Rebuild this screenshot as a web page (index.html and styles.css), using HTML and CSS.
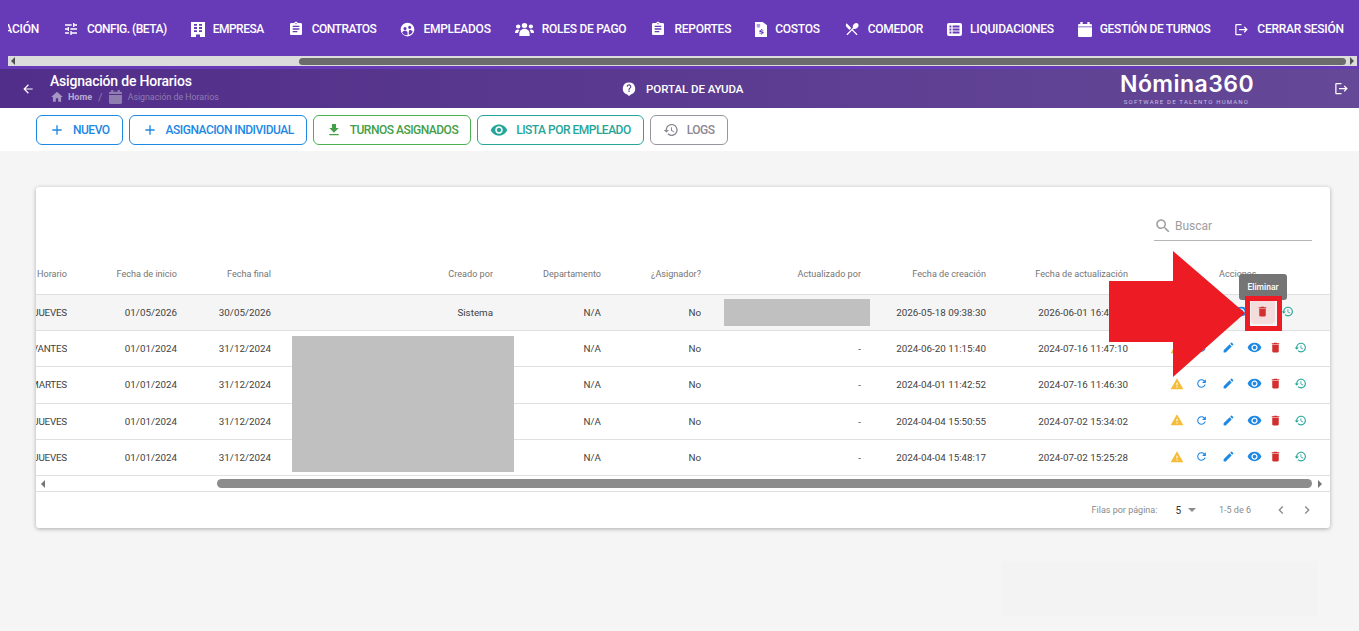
FILE: index.html
```html
<!doctype html>
<html lang="es">
<head>
	<meta charset="UTF-8">
	<title>Asignación de Horarios</title>
	<link rel="stylesheet" href="styles.css">
</head>
<body>
	<svg class="defs" width="0" height="0">
		<symbol id="i-tune" viewBox="0 0 24 24"><path d="M3 17v2h6v-2H3zM3 5v2h10V5H3zm10 16v-2h8v-2h-8v-2h-2v6h2zM7 9v2H3v2h4v2h2V9H7zm14 4v-2H11v2h10zm-6-4h2V7h4V5h-4V3h-2v6z"/></symbol>
		<symbol id="i-building" viewBox="1 0 14 24" preserveAspectRatio="none"><path fill-rule="evenodd" d="M1 0h14v24H10v-4H6v4H1V0zm3 3v3h3V3H4zm5 0v3h3V3H9zM4 8v3h3V8H4zm5 0v3h3V8H9zm-5 5v3h3v-3H4zm5 0v3h3v-3H9z"/></symbol>
		<symbol id="i-clip" viewBox="0 0 24 24"><path d="M19 3h-4.180C14.400 1.840 13.300 1 12 1c-1.300 0-2.400.84-2.820 2H5c-1.100 0-2 .9-2 2v14c0 1.100.9 2 2 2h14c1.100 0 2-.9 2-2V5c0-1.100-.9-2-2-2zm-7 0c.55 0 1 .45 1 1s-.45 1-1 1-1-.45-1-1 .45-1 1-1zm2 14H7v-2h7v2zm3-4H7v-2h10v2zm0-4H7V7h10v2z"/></symbol>
		<symbol id="i-emp" viewBox="0 0 24 24"><path fill-rule="evenodd" d="M12 1a11 11 0 1 0 0 22 11 11 0 0 0 0-22zM8 8a2.500 2.500 0 1 1 0 5 2.500 2.500 0 0 1 0-5zm7.500-2a2.500 2.500 0 1 1 0 5 2.500 2.500 0 0 1 0-5zM3.500 17c.5-2 2.500-3 4.500-3s3.500.8 4 2.500V21a9 9 0 0 1-8.500-4zM14 20.500V16c0-1 .5-2 .8-3 2.200-.3 4.700.6 5.700 2.500A9 9 0 0 1 14 20.500z"/></symbol>
		<symbol id="i-users" viewBox="0 0 24 18" preserveAspectRatio="none"><path d="M12 0a3.500 3.500 0 1 1 0 7 3.500 3.500 0 0 1 0-7zM4 2a2.800 2.800 0 1 1 0 5.600A2.800 2.800 0 0 1 4 2zm16 0a2.800 2.800 0 1 1 0 5.600A2.800 2.800 0 0 1 20 2zM0 13c0-2.500 1.500-4 3.500-4 1 0 1.700.3 2.300.8C4.500 11 4 12.500 4 14H0v-1zm24 0v1h-4c0-1.500-.5-3-1.800-4.200.6-.5 1.300-.8 2.300-.8 2 0 3.500 1.500 3.500 4zM5.500 15c0-3.500 2.500-7 6.500-7s6.500 3.500 6.500 7v3h-13v-3z"/></symbol>
		<symbol id="i-doc" viewBox="1 0 14 24" preserveAspectRatio="none"><path fill-rule="evenodd" d="M1 0h9l5 5v19H1V0zm2 4v1.500h4V4H3zm0 3v1.500h4V7H3zm5 4.500v1.200c-1.300.2-2 1-2 2 0 1.200 1 1.600 2 1.900.9.300 1.200.5 1.200.9s-.5.700-1.200.7c-.8 0-1.300-.3-1.400-.9H5.800c.1 1.100.9 1.800 2.200 2V20h1v-1.200c1.300-.2 2.200-1 2.200-2.100 0-1.300-1-1.700-2.200-2-.8-.3-1-.5-1-.8 0-.4.400-.6 1-.6s1 .3 1.100.7h1.100c-.1-1-.9-1.600-2.200-1.800v-1.200H8z"/></symbol>
		<symbol id="i-dining" viewBox="0 0 24 24"><path d="M8.100 13.340l2.830-2.830L3.910 3.500c-1.560 1.560-1.560 4.090 0 5.660l4.190 4.180zm6.780-1.810c1.530.71 3.680.21 5.270-1.380 1.910-1.910 2.280-4.650.81-6.120-1.460-1.460-4.200-1.100-6.120.81-1.590 1.590-2.090 3.740-1.380 5.270L3.700 19.870l1.410 1.410L12 14.410l6.880 6.880 1.410-1.410L13.410 13l1.470-1.470z"/></symbol>
		<symbol id="i-list" viewBox="0 0 24 20" preserveAspectRatio="none"><path fill-rule="evenodd" d="M3 0h18a3 3 0 0 1 3 3v14a3 3 0 0 1-3 3H3a3 3 0 0 1-3-3V3a3 3 0 0 1 3-3zm1 4v3h3V4H4zm5 0v3h11V4H9zM4 8.500v3h3v-3H4zm5 0v3h11v-3H9zM4 13v3h3v-3H4zm5 0v3h11v-3H9z"/></symbol>
		<symbol id="i-cal" viewBox="3 0 18 24" preserveAspectRatio="none"><path d="M19 3h-1V0h-3v3H9V0H6v3H5C3.900 3 3 3.900 3 5v2h18V5c0-1.100-.9-2-2-2zM3 8.500V22c0 1.100.9 2 2 2h14c1.100 0 2-.9 2-2V8.500H3z"/></symbol>
		<symbol id="i-logout" viewBox="0 0 24 24"><path d="M17 7l-1.410 1.410L18.170 11H8v2h10.170l-2.580 2.580L17 17l5-5zM4 5h8V3H4c-1.100 0-2 .9-2 2v14c0 1.100.9 2 2 2h8v-2H4V5z"/></symbol>
		<symbol id="i-back" viewBox="0 0 24 24"><path d="M20 11H7.830l5.590-5.590L12 4l-8 8 8 8 1.410-1.410L7.830 13H20v-2z"/></symbol>
		<symbol id="i-home" viewBox="0 0 24 24"><path d="M10 20v-6h4v6h5v-8h3L12 3 2 12h3v8z"/></symbol>
		<symbol id="i-help" viewBox="0 0 24 24"><path fill-rule="evenodd" d="M12 1a10.500 10.500 0 0 0-3 20.600L12 24l3-2.400A10.500 10.500 0 0 0 12 1zm1 16h-2v-2h2v2zm2.100-6.700l-.9.9c-.7.700-1.200 1.300-1.200 2.800h-2v-.5c0-1.100.5-2.100 1.200-2.800l1.200-1.300c.4-.4.600-.9.600-1.400 0-1.100-.9-2-2-2s-2 .9-2 2H8c0-2.200 1.800-4 4-4s4 1.800 4 4c0 .9-.4 1.700-.9 2.300z"/></symbol>
		<symbol id="i-add" viewBox="0 0 24 24"><path d="M19 13h-6v6h-2v-6H5v-2h6V5h2v6h6v2z"/></symbol>
		<symbol id="i-down" viewBox="0 0 24 24"><path d="M19 9h-4V3H9v6H5l7 7 7-7zM5 18v2h14v-2H5z"/></symbol>
		<symbol id="i-eye" viewBox="0 0 24 24"><path d="M12 4.500C7 4.500 2.730 7.610 1 12c1.730 4.390 6 7.500 11 7.500s9.270-3.110 11-7.500c-1.730-4.390-6-7.500-11-7.500zM12 17c-2.760 0-5-2.240-5-5s2.240-5 5-5 5 2.240 5 5-2.240 5-5 5zm0-8c-1.660 0-3 1.340-3 3s1.340 3 3 3 3-1.340 3-3-1.340-3-3-3z"/></symbol>
		<symbol id="i-history" viewBox="0 0 24 24"><path d="M13 3c-4.970 0-9 4.030-9 9H1l3.890 3.890.07.14L9 12H6c0-3.870 3.130-7 7-7s7 3.130 7 7-3.130 7-7 7c-1.930 0-3.680-.79-4.940-2.060l-1.420 1.420C8.270 19.990 10.510 21 13 21c4.970 0 9-4.030 9-9s-4.030-9-9-9zm-1 5v5l4.280 2.540.72-1.210-3.500-2.080V8H12z"/></symbol>
		<symbol id="i-warn" viewBox="0 0 24 24"><path d="M1 21h22L12 2 1 21zm12-3h-2v-2h2v2zm0-4h-2v-4h2v4z"/></symbol>
		<symbol id="i-refresh" viewBox="0 0 24 24"><path d="M17.650 6.350C16.200 4.900 14.210 4 12 4c-4.420 0-7.990 3.580-7.990 8s3.570 8 7.990 8c3.730 0 6.840-2.550 7.730-6h-2.080c-.82 2.330-3.040 4-5.650 4-3.310 0-6-2.690-6-6s2.690-6 6-6c1.660 0 3.140.69 4.220 1.780L13 11h7V4l-2.350 2.350z"/></symbol>
		<symbol id="i-edit" viewBox="0 0 24 24"><path d="M3 17.250V21h3.750L17.810 9.940l-3.750-3.750L3 17.250zM20.710 7.040c.39-.39.39-1.020 0-1.410l-2.340-2.340c-.39-.39-1.020-.39-1.410 0l-1.830 1.830 3.750 3.750 1.830-1.830z"/></symbol>
		<symbol id="i-del" viewBox="0 0 24 24"><path d="M6 19c0 1.100.9 2 2 2h8c1.100 0 2-.9 2-2V7H6v12zM19 4h-3.500l-1-1h-5l-1 1H5v2h14V4z"/></symbol>
		<symbol id="i-search" viewBox="0 0 24 24"><path d="M15.500 14h-.79l-.28-.27C15.410 12.590 16 11.110 16 9.500 16 5.910 13.090 3 9.500 3S3 5.910 3 9.500 5.910 16 9.500 16c1.610 0 3.090-.59 4.230-1.570l.27.28v.79l5 4.990L20.490 19l-4.990-5zm-6 0C7.010 14 5 11.990 5 9.500S7.010 5 9.500 5 14 7.010 14 9.500 11.990 14 9.500 14z"/></symbol>
		<symbol id="i-prev" viewBox="0 0 24 24"><path d="M15.410 7.410L14 6l-6 6 6 6 1.410-1.410L10.830 12z"/></symbol>
		<symbol id="i-next" viewBox="0 0 24 24"><path d="M10 6L8.590 7.410 13.170 12l-4.580 4.580L10 18l6-6z"/></symbol>
	</svg>

	<header class="topbar">
		<nav class="menu">
			<a class="menu-item menu-cut">ACIÓN</a>
			<a class="menu-item menu-tight"><svg class="ic w16"><use href="#i-tune"/></svg>CONFIG. (BETA)</a>
			<a class="menu-item menu-tight"><svg class="ic m-tall"><use href="#i-building"/></svg>EMPRESA</a>
			<a class="menu-item menu-tight"><svg class="ic w16"><use href="#i-clip"/></svg>CONTRATOS</a>
			<a class="menu-item"><svg class="ic w15"><use href="#i-emp"/></svg>EMPLEADOS</a>
			<a class="menu-item"><svg class="ic m-users"><use href="#i-users"/></svg>ROLES DE PAGO</a>
			<a class="menu-item"><svg class="ic w16"><use href="#i-clip"/></svg>REPORTES</a>
			<a class="menu-item"><svg class="ic m-doc"><use href="#i-doc"/></svg>COSTOS</a>
			<a class="menu-item"><svg class="ic w16"><use href="#i-dining"/></svg>COMEDOR</a>
			<a class="menu-item"><svg class="ic m-list"><use href="#i-list"/></svg>LIQUIDACIONES</a>
			<a class="menu-item menu-gest"><svg class="ic m-cal"><use href="#i-cal"/></svg>GESTIÓN DE TURNOS</a>
			<a class="menu-item"><svg class="ic w15"><use href="#i-logout"/></svg>CERRAR SESIÓN</a>
		</nav>
		<div class="hscroll hscroll-top">
			<span class="arrow arrow-left"></span>
			<div class="thumb"></div>
			<span class="arrow arrow-right"></span>
		</div>
	</header>

	<div class="subbar">
		<svg class="ic back"><use href="#i-back"/></svg>
		<div class="title-box">
			<h1>Asignación de Horarios</h1>
			<div class="crumbs">
				<svg class="ic w14"><use href="#i-home"/></svg><b>Home</b><i>/</i>
				<svg class="ic crumb-cal"><use href="#i-cal"/></svg><span>Asignación de Horarios</span>
			</div>
		</div>
		<a class="help"><svg class="ic w14"><use href="#i-help"/></svg>PORTAL DE AYUDA</a>
		<div class="logo">
			<strong>Nómina360</strong>
			<small>SOFTWARE DE TALENTO HUMANO</small>
		</div>
		<svg class="ic exit"><use href="#i-logout"/></svg>
	</div>

	<div class="toolbar">
		<a class="btn btn-blue"><svg class="ic w16"><use href="#i-add"/></svg>NUEVO</a>
		<a class="btn btn-blue"><svg class="ic w16"><use href="#i-add"/></svg>ASIGNACION INDIVIDUAL</a>
		<a class="btn btn-green"><svg class="ic w16"><use href="#i-down"/></svg>TURNOS ASIGNADOS</a>
		<a class="btn btn-teal"><svg class="ic w18"><use href="#i-eye"/></svg>LISTA POR EMPLEADO</a>
		<a class="btn btn-gray"><svg class="ic w16"><use href="#i-history"/></svg>LOGS</a>
	</div>

	<main class="content">
		<section class="card">
			<div class="card-top">
				<label class="search"><svg class="ic w18"><use href="#i-search"/></svg>Buscar</label>
			</div>
			<div class="table-clip">
				<table class="grid">
					<colgroup>
						<col class="c1"><col class="c2"><col class="c3"><col class="c4"><col class="c5">
						<col class="c6"><col class="c7"><col class="c8"><col class="c9"><col class="c10">
					</colgroup>
					<thead>
						<tr>
							<th>Horario</th><th>Fecha de inicio</th><th>Fecha final</th><th>Creado por</th><th>Departamento</th>
							<th>¿Asignador?</th><th>Actualizado por</th><th>Fecha de creación</th><th>Fecha de actualización</th>
							<th class="th-actions">Acciones</th>
						</tr>
					</thead>
					<tbody>
						<tr class="row-hover">
							<td>TURNO JUEVES</td><td>01/05/2026</td><td>30/05/2026</td><td>Sistema</td><td>N/A</td><td>No</td><td></td>
							<td>2026-05-18 09:38:30</td><td>2026-06-01 16:47:10</td>
							<td class="td-actions">
								<div class="actions">
									<svg class="ic warn"><use href="#i-warn"/></svg>
									<svg class="ic blue s13"><use href="#i-refresh"/></svg>
									<svg class="ic blue s13"><use href="#i-edit"/></svg>
									<svg class="ic blue s15"><use href="#i-eye"/></svg>
									<span class="del-hover"><svg class="ic del s13"><use href="#i-del"/></svg></span>
									<svg class="ic teal s13"><use href="#i-history"/></svg>
								</div>
							</td>
						</tr>
						<tr>
							<td>TURNO AVANTES</td><td>01/01/2024</td><td>31/12/2024</td><td></td><td>N/A</td><td>No</td><td>-</td>
							<td>2024-06-20 11:15:40</td><td>2024-07-16 11:47:10</td>
							<td class="td-actions">
								<div class="actions">
									<svg class="ic warn"><use href="#i-warn"/></svg>
									<svg class="ic blue s13"><use href="#i-refresh"/></svg>
									<svg class="ic blue s13"><use href="#i-edit"/></svg>
									<svg class="ic blue s15"><use href="#i-eye"/></svg>
									<svg class="ic del s13"><use href="#i-del"/></svg>
									<svg class="ic teal s13"><use href="#i-history"/></svg>
								</div>
							</td>
						</tr>
						<tr>
							<td>TURNO MARTES</td><td>01/01/2024</td><td>31/12/2024</td><td></td><td>N/A</td><td>No</td><td>-</td>
							<td>2024-04-01 11:42:52</td><td>2024-07-16 11:46:30</td>
							<td class="td-actions">
								<div class="actions">
									<svg class="ic warn"><use href="#i-warn"/></svg>
									<svg class="ic blue s13"><use href="#i-refresh"/></svg>
									<svg class="ic blue s13"><use href="#i-edit"/></svg>
									<svg class="ic blue s15"><use href="#i-eye"/></svg>
									<svg class="ic del s13"><use href="#i-del"/></svg>
									<svg class="ic teal s13"><use href="#i-history"/></svg>
								</div>
							</td>
						</tr>
						<tr>
							<td>TURNO JUEVES</td><td>01/01/2024</td><td>31/12/2024</td><td></td><td>N/A</td><td>No</td><td>-</td>
							<td>2024-04-04 15:50:55</td><td>2024-07-02 15:34:02</td>
							<td class="td-actions">
								<div class="actions">
									<svg class="ic warn"><use href="#i-warn"/></svg>
									<svg class="ic blue s13"><use href="#i-refresh"/></svg>
									<svg class="ic blue s13"><use href="#i-edit"/></svg>
									<svg class="ic blue s15"><use href="#i-eye"/></svg>
									<svg class="ic del s13"><use href="#i-del"/></svg>
									<svg class="ic teal s13"><use href="#i-history"/></svg>
								</div>
							</td>
						</tr>
						<tr>
							<td>TURNO JUEVES</td><td>01/01/2024</td><td>31/12/2024</td><td></td><td>N/A</td><td>No</td><td>-</td>
							<td>2024-04-04 15:48:17</td><td>2024-07-02 15:25:28</td>
							<td class="td-actions">
								<div class="actions">
									<svg class="ic warn"><use href="#i-warn"/></svg>
									<svg class="ic blue s13"><use href="#i-refresh"/></svg>
									<svg class="ic blue s13"><use href="#i-edit"/></svg>
									<svg class="ic blue s15"><use href="#i-eye"/></svg>
									<svg class="ic del s13"><use href="#i-del"/></svg>
									<svg class="ic teal s13"><use href="#i-history"/></svg>
								</div>
							</td>
						</tr>
					</tbody>
				</table>
			</div>
			<div class="hscroll hscroll-table">
				<span class="arrow arrow-left"></span>
				<div class="thumb"></div>
				<span class="arrow arrow-right"></span>
			</div>
			<div class="pager">
				<span class="pager-label">Filas por página:</span>
				<span class="pager-size">5</span>
				<span class="pager-caret"></span>
				<span class="pager-range">1-5 de 6</span>
				<svg class="ic pager-prev"><use href="#i-prev"/></svg>
				<svg class="ic pager-next"><use href="#i-next"/></svg>
			</div>
		</section>
	</main>

	<!-- tapas y anotaciones sobre la captura -->
	<div class="cover cover-a"></div>
	<div class="cover cover-b"></div>
	<div class="cover cover-c"></div>
	<div class="tooltip">Eliminar</div>
	<div class="mark-box"></div>
	<svg class="mark-arrow" width="136" height="126" viewBox="0 0 136 126"><polygon points="0,30 64,30 64,0 136,62 64,126 64,91 0,91"/></svg>
</body>
</html>
```

FILE: styles.css
```css
html, body {
	margin: 0;
	padding: 0;
}
body {
	position: relative;
	height: 631px;
	overflow: hidden;
	background: #f5f5f5;
	font-family: Roboto, "Liberation Sans", sans-serif;
	font-size: 10px;
	color: #424242;
}
.defs {
	position: absolute;
}
.ic {
	display: block;
	flex: none;
	width: 16px;
	height: 16px;
	fill: currentColor;
}
.w14 { width: 14px; height: 14px; }
.w15 { width: 15px; height: 15px; }
.w16 { width: 16px; height: 16px; }
.w18 { width: 18px; height: 18px; }
.s13 { width: 13px; height: 13px; }
.s15 { width: 15px; height: 15px; }

/* barra superior */
.topbar {
	height: 69px;
	background: #673ab7;
}
.menu {
	display: flex;
	align-items: center;
	gap: 24px;
	box-sizing: border-box;
	height: 56px;
	margin-left: 8px;
	padding-top: 2px;
	overflow: hidden;
	color: #fff;
	font-size: 12px;
	font-weight: 500;
	letter-spacing: -.25px;
	white-space: nowrap;
}
.menu-item {
	display: flex;
	align-items: center;
	gap: 8px;
}
.menu-tight {
	letter-spacing: -.5px;
}
.menu-gest {
	letter-spacing: -.37px;
}
.menu-cut {
	width: 31px;
	justify-content: flex-end;
}
.m-tall { width: 14px; height: 15px; }
.m-users { width: 19px; height: 13px; }
.m-doc { width: 12px; height: 15px; }
.m-list { width: 15px; height: 13px; }
.m-cal { width: 14px; height: 15px; }
.hscroll {
	display: flex;
	align-items: center;
}
.hscroll-top {
	height: 10px;
	margin: 0 2px 0 8px;
	padding: 0 3px;
	background: #dcdcdc;
}
.hscroll-top .thumb {
	width: 1047px;
	height: 7px;
	margin-left: 284px;
	border-radius: 4px;
	background: #6b6b6b;
}
.arrow {
	width: 0;
	height: 0;
	border-top: 4px solid transparent;
	border-bottom: 4px solid transparent;
}
.arrow-left {
	border-right: 4px solid #505050;
}
.arrow-right {
	margin-left: auto;
	border-left: 4px solid #505050;
}

/* cabecera de la seccion */
.subbar {
	display: flex;
	align-items: center;
	height: 39px;
	background: linear-gradient(90deg, #512e8a, #654897);
	color: #fff;
}
.back {
	width: 14px;
	height: 14px;
	margin-left: 21px;
}
.title-box {
	width: 572px;
	margin-left: 15px;
}
.title-box h1 {
	margin: 0;
	font-size: 14px;
	font-weight: 500;
	line-height: 17px;
	letter-spacing: -.2px;
}
.crumbs {
	display: flex;
	align-items: center;
	gap: 4px;
	height: 14px;
	color: #8f7db0;
	font-size: 8.800px;
}
.crumbs b {
	font-size: 9px;
	color: #b8abd2;
}
.crumbs .ic {
	color: #a596c4;
}
.crumbs i {
	margin: 0 2px;
	font-size: 11px;
	font-style: normal;
}
.crumbs .crumb-cal {
	width: 13px;
	height: 14px;
	margin-right: 2px;
	color: #8f7db0;
}
.help {
	display: flex;
	align-items: center;
	gap: 10px;
	width: 498px;
	font-size: 11.500px;
	font-weight: 500;
	letter-spacing: -.05px;
}
.logo {
	align-self: flex-start;
	width: 133px;
	padding-top: 1px;
	text-align: center;
}
.logo strong {
	display: block;
	font-family: Inter, sans-serif;
	font-size: 23px;
	font-weight: 600;
	line-height: 28px;
	letter-spacing: .45px;
	white-space: nowrap;
}
.logo small {
	display: block;
	color: #c9bfe0;
	font-size: 6px;
	line-height: 7px;
	letter-spacing: 1.200px;
	white-space: nowrap;
}
.exit {
	width: 15px;
	height: 15px;
	margin-left: 81px;
}

/* botones */
.toolbar {
	display: flex;
	gap: 6px;
	height: 30px;
	padding: 7px 36px 6px;
	background: #fff;
}
.btn {
	display: flex;
	align-items: center;
	gap: 8px;
	box-sizing: border-box;
	height: 30px;
	padding: 0 12px;
	border: 1px solid;
	border-radius: 6px;
	font-size: 12px;
	font-weight: 500;
	letter-spacing: -.5px;
	white-space: nowrap;
}
.btn-blue { color: #1e88e5; border-color: #1e88e5; }
.btn-green { color: #43a047; border-color: #4caf50; }
.btn-teal { color: #26a69a; border-color: #26a69a; }
.btn-gray { color: #8d8794; border-color: #9a94a0; }

/* tarjeta con la tabla */
.content {
	padding: 36px 29px 0 36px;
}
.card {
	width: 1294px;
	border-radius: 3px;
	background: #fff;
	box-shadow: 0 1px 4px rgba(0, 0, 0, .3);
}
.card-top {
	display: flex;
	justify-content: flex-end;
	box-sizing: border-box;
	height: 68px;
	padding: 29px 18px 0 0;
}
.search {
	display: flex;
	align-items: center;
	gap: 3px;
	box-sizing: border-box;
	width: 158px;
	height: 25px;
	padding-bottom: 5px;
	border-bottom: 1px solid #b5b5b5;
	color: #9e9e9e;
	font-size: 12px;
}
.table-clip {
	overflow: hidden;
}
.grid {
	width: 1354px;
	margin-left: -60px;
	border-collapse: collapse;
	table-layout: fixed;
}
.c1 { width: 91px; }
.c2 { width: 110px; }
.c3 { width: 94px; }
.c4 { width: 222px; }
.c5 { width: 108px; }
.c6 { width: 100px; }
.c7 { width: 160px; }
.c8 { width: 125px; }
.c9 { width: 142px; }
.c10 { width: 202px; }
.grid th, .grid td {
	padding: 0;
	text-align: right;
	white-space: nowrap;
	overflow: hidden;
}
.grid th {
	height: 39px;
	padding-bottom: 1px;
	box-sizing: border-box;
	border-bottom: 1px solid #e0e0e0;
	color: #757575;
	font-size: 9.100px;
	font-weight: 400;
}
.grid td {
	height: 36.400px;
	box-sizing: border-box;
	border-bottom: 1px solid #e0e0e0;
	font-size: 9.800px;
}
.grid td:first-child {
	letter-spacing: -.2px;
}
.grid .th-actions {
	padding-left: 91px;
	text-align: left;
}
.grid .td-actions {
	padding-left: 36px;
}
.row-hover td {
	background: #f5f5f5;
}
.grid .row-hover .td-actions {
	padding-left: 23px;
}
.actions {
	display: grid;
	grid-template-columns: 25px 25px 29px 23px 19px 31px;
	justify-items: center;
	align-items: center;
	padding-bottom: 2px;
}
.warn { width: 14px; height: 14px; color: #f6bd3b; }
.blue { color: #1e88e5; }
.del { color: #d32f2f; }
.teal { color: #26a69a; }
.del-hover {
	display: flex;
	align-items: center;
	justify-content: center;
	width: 24px;
	height: 25px;
	border-radius: 4px;
	background: #f5dcdc;
}
.hscroll-table {
	box-sizing: border-box;
	height: 16px;
	padding: 0 8px 0 5px;
	border-bottom: 1px solid #e0e0e0;
}
.hscroll-table .thumb {
	width: 1095px;
	height: 9px;
	margin-left: 172px;
	border-radius: 5px;
	background: #8c8c8c;
}
.hscroll-table .arrow-left { border-right-color: #757575; }
.hscroll-table .arrow-right { border-left-color: #757575; }
.pager {
	display: flex;
	align-items: center;
	justify-content: flex-end;
	height: 36px;
	padding-right: 15px;
	color: #8a8a8a;
	font-size: 9px;
}
.pager-size {
	margin-left: 18px;
	color: #333;
	font-size: 10px;
}
.pager-caret {
	margin-left: 7px;
	border-top: 4px solid #8a8a8a;
	border-left: 4.500px solid transparent;
	border-right: 4.500px solid transparent;
}
.pager-range {
	margin-left: 23px;
}
.pager-prev, .pager-next {
	width: 16px;
	height: 16px;
	color: #8a8a8a;
}
.pager-prev {
	margin-left: 22px;
}
.pager-next {
	margin-left: 10px;
}

/* lo que queda encima de la tabla */
.cover {
	position: absolute;
}
.cover-a {
	left: 724px;
	top: 299px;
	width: 146px;
	height: 27px;
	background: #c0c0c0;
}
.cover-b {
	left: 292px;
	top: 336px;
	width: 222px;
	height: 136px;
	background: #c0c0c0;
}
.cover-c {
	left: 1002px;
	top: 561px;
	width: 315px;
	height: 55px;
	background: #f3f3f3;
}
.tooltip {
	position: absolute;
	left: 1239px;
	top: 274px;
	width: 48px;
	height: 26px;
	border-radius: 3px;
	background: #757575;
	color: #fff;
	font-size: 8.500px;
	font-weight: 500;
	line-height: 26px;
	text-align: center;
}
.mark-box {
	position: absolute;
	left: 1245px;
	top: 296px;
	box-sizing: border-box;
	width: 37px;
	height: 35px;
	border: 5px solid #ed1c24;
}
.mark-arrow {
	position: absolute;
	left: 1109px;
	top: 251px;
	fill: #ed1c24;
}
```
